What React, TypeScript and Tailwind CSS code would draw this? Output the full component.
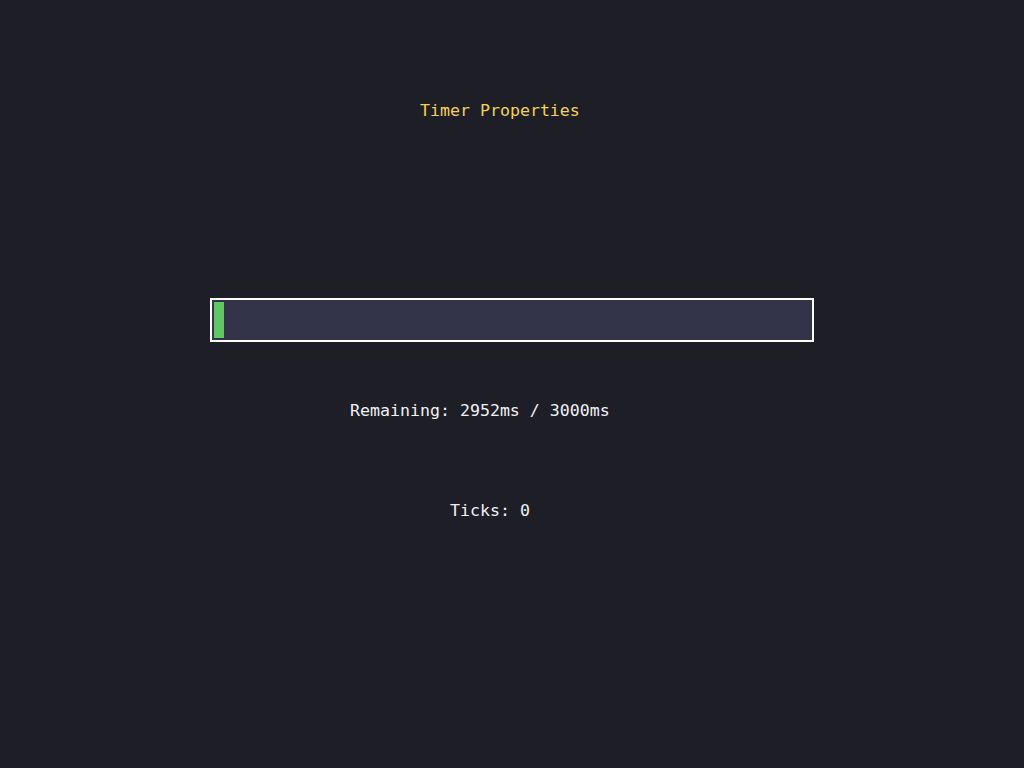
import React from 'react';

const total = 3000;
const remaining = 2952;

const App: React.FC = () => {
    const pct = ((total - remaining) / total) * 100;
    return (
        <div className="min-h-screen w-full bg-[#1e1e27] pt-[101px] text-[16.6px] leading-[20px] text-[#f0f0f4]" style={{ fontFamily: '"DejaVu Sans Mono", "Liberation Mono", monospace' }}>
            <div className="h-[20px] pl-[420px] text-[#f5d05a]">Timer Properties</div>
            <div className="ml-[210px] mt-[177px] h-[44px] w-[604px] border-2 border-white bg-[#33334a] p-[2px]">
                <div className="h-full bg-[#5fc862]" style={{ width: `${pct}%` }} />
            </div>
            <div className="mt-[59px] h-[20px] pl-[350px]">Remaining: {remaining}ms / {total}ms</div>
            <div className="mt-[80px] h-[20px] pl-[450px]">Ticks: 0</div>
        </div>
    );
};

export default App;
